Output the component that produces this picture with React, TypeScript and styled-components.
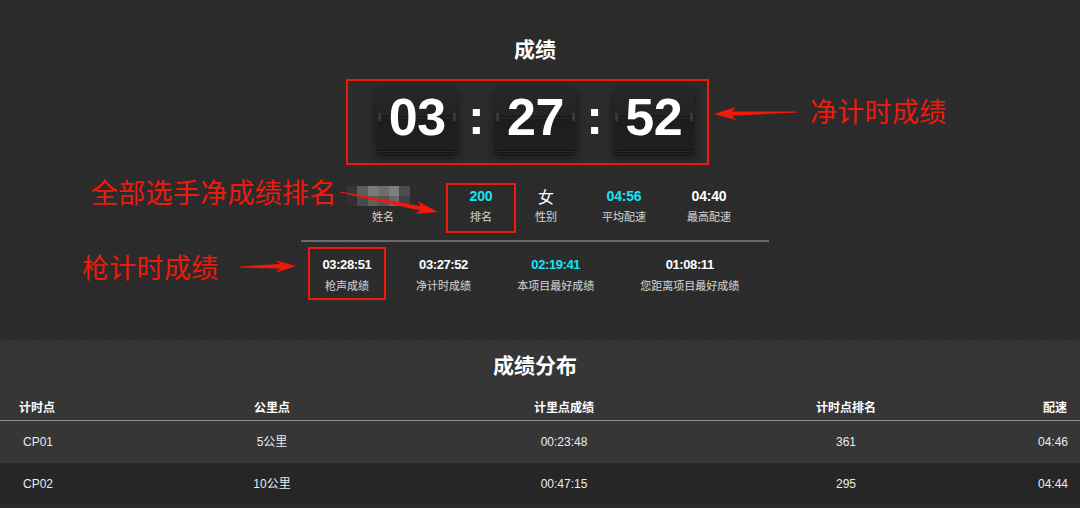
import React from 'react';
import styled, { createGlobalStyle } from 'styled-components';

const GlobalStyle = createGlobalStyle`
  html, body { margin: 0; padding: 0; background: #2b2b2b; }
  body { font-family: "Liberation Sans", "Noto Sans CJK SC", Arial, sans-serif; color: #fff; }
  * { box-sizing: border-box; }
`;

const CJK = `"Noto Sans CJK SC", "Liberation Sans", sans-serif`;
const RED = '#f0190c';
const CYAN = '#14e6f5';

const Page = styled.div`
  position: relative;
  width: 1080px;
  height: 508px;
  overflow: hidden;
`;

const TopSection = styled.section`
  height: 340px;
  padding: 34px 10px 0 0;
  display: flex;
  flex-direction: column;
  align-items: center;
  background: #2b2b2b;
  background-image: radial-gradient(rgba(255,255,255,0.018) 1px, transparent 1px);
  background-size: 3px 3px;
`;

const Title = styled.h1`
  margin: 0;
  font-family: ${CJK};
  font-size: 21px;
  font-weight: 700;
  line-height: 28px;
  color: #fff;
`;

const Clock = styled.div`
  margin-top: 17px;
  margin-right: 15px;
  width: 363px;
  height: 86px;
  border: 2px solid ${RED};
  padding: 3px 13px 8px 29px;
  display: flex;
  align-items: flex-start;
`;

const FlipCard = styled.div`
  position: relative;
  width: 81px;
  height: 66px;
  border-radius: 4px;
  background: linear-gradient(#282828 0%, #232323 48%, #1d1d1d 52%, #1f1f1f 100%);
  box-shadow: 0 1px 0 #121212, 0 2px 0 #2c2c2c, 0 3px 0 #141414, 0 4px 0 #282828,
    0 5px 0 #151515, 0 7px 8px rgba(0, 0, 0, 0.55);

  &::before {
    content: '';
    position: absolute;
    left: 0;
    right: 0;
    top: 32px;
    height: 2px;
    background: linear-gradient(#0e0e0e 50%, #2e2e2e 50%);
    opacity: 0.85;
  }
  &::after {
    content: '';
    position: absolute;
    left: 1px;
    right: 1px;
    top: 29px;
    height: 8px;
    border-left: 3px solid #3a3a3a;
    border-right: 3px solid #3a3a3a;
    border-radius: 1px;
  }
`;

const Digits = styled.span`
  position: relative;
  z-index: 1;
  display: block;
  font-family: "Liberation Sans", Arial, sans-serif;
  font-size: 52px;
  font-weight: 700;
  line-height: 66px;
  text-align: center;
  color: #fff;
  letter-spacing: -0.5px;
`;

const Colon = styled.span`
  width: 38px;
  text-align: center;
  font-family: "Liberation Sans", Arial, sans-serif;
  font-size: 50px;
  font-weight: 700;
  line-height: 66px;
  color: #fff;
`;

const InfoRow = styled.div`
  margin-top: 18px;
  margin-right: 4px;
  display: flex;
`;

const Stat = styled.div<{ $w: number; $hl?: boolean; $pad: string }>`
  width: ${(p) => p.$w}px;
  border: 2px solid ${(p) => (p.$hl ? RED : 'transparent')};
  padding: ${(p) => p.$pad};
  display: flex;
  flex-direction: column;
  align-items: center;
`;

const Value = styled.div<{ $accent?: boolean; $size: number; $lh: number }>`
  font-family: "Liberation Sans", Arial, sans-serif;
  font-weight: 700;
  font-size: ${(p) => p.$size}px;
  line-height: ${(p) => p.$lh}px;
  letter-spacing: ${(p) => (p.$size < 14 ? '-0.4px' : '-0.2px')};
  color: ${(p) => (p.$accent ? CYAN : '#fff')};
  white-space: nowrap;
`;

const Gender = styled.div`
  font-family: ${CJK};
  font-size: 16px;
  line-height: 20px;
  color: #fff;
`;

const Label = styled.div<{ $gap: number }>`
  margin-top: ${(p) => p.$gap}px;
  font-family: ${CJK};
  font-size: 11px;
  font-weight: 500;
  line-height: 16px;
  color: #bdbdbd;
  white-space: nowrap;
`;

const Mosaic = styled.div`
  margin-left: -10px;
  height: 20px;
  display: grid;
  grid-template-columns: repeat(6, 10.5px);
  grid-template-rows: repeat(2, 10px);
  filter: blur(0.4px);
`;

const Tile = styled.span<{ $c: string }>`
  background: ${(p) => p.$c};
`;

const Divider = styled.hr`
  margin: 7px 0 0;
  width: 468px;
  height: 2px;
  border: 0;
  background: #6a6a6a;
`;

const ResultRow = styled.div`
  margin-top: 5px;
  width: 468px;
  padding-left: 7px;
  display: flex;
`;

const BottomSection = styled.section`
  background: #363636;
  border-top: 1px solid #303030;
`;

const SubTitle = styled.h2`
  margin: 0;
  padding: 9px 10px 0 0;
  text-align: center;
  font-family: ${CJK};
  font-size: 21px;
  font-weight: 700;
  line-height: 28px;
  color: #fff;
`;

const Grid = styled.div`
  display: grid;
  grid-template-columns: 172px 200px 384px 180px 1fr;
`;

const HeadRow = styled(Grid)`
  padding-top: 21px;
  padding-bottom: 5px;
  border-bottom: 1px solid #8f8f8f;
`;

const BodyRow = styled(Grid)<{ $alt?: boolean }>`
  height: 42px;
  background: ${(p) => (p.$alt ? '#262626' : '#363636')};
`;

type Align = 'left' | 'center' | 'right';

const HeadCell = styled.div<{ $align: Align }>`
  text-align: ${(p) => p.$align};
  padding: ${(p) => (p.$align === 'left' ? '0 0 0 19px' : p.$align === 'right' ? '0 13px 0 0' : '0')};
  font-family: ${CJK};
  font-size: 12px;
  font-weight: 700;
  line-height: 16px;
  color: #fff;
`;

const Cell = styled.div<{ $align: Align }>`
  text-align: ${(p) => p.$align};
  padding: ${(p) => (p.$align === 'left' ? '0 0 0 23px' : p.$align === 'right' ? '0 12px 0 0' : '0')};
  font-family: "Liberation Sans", ${CJK};
  font-size: 12px;
  line-height: 42px;
  color: #ececec;
`;

const Overlay = styled.svg`
  position: absolute;
  left: 0;
  top: 0;
  pointer-events: none;
`;

const Note = styled.div<{ $x: number; $y: number }>`
  position: absolute;
  left: ${(p) => p.$x}px;
  top: ${(p) => p.$y}px;
  font-family: ${CJK};
  font-size: 27px;
  line-height: 34px;
  color: ${RED};
  white-space: nowrap;
  letter-spacing: 0.3px;
`;

function arrowPoints(x1: number, y1: number, x2: number, y2: number, headLen = 22, headHalf = 6.5, tailHalf = 0.6, neckHalf = 2.2) {
  const dx = x2 - x1;
  const dy = y2 - y1;
  const L = Math.hypot(dx, dy);
  const ux = dx / L;
  const uy = dy / L;
  const px = -uy;
  const py = ux;
  const nx = x2 - ux * headLen;
  const ny = y2 - uy * headLen;
  const bx = x2 - ux * (headLen - 4);
  const by = y2 - uy * (headLen - 4);
  const pts: [number, number][] = [
    [x1 + px * tailHalf, y1 + py * tailHalf],
    [bx + px * neckHalf, by + py * neckHalf],
    [nx + px * headHalf, ny + py * headHalf],
    [x2, y2],
    [nx - px * headHalf, ny - py * headHalf],
    [bx - px * neckHalf, by - py * neckHalf],
    [x1 - px * tailHalf, y1 - py * tailHalf],
  ];
  return pts.map((p) => `${p[0].toFixed(1)},${p[1].toFixed(1)}`).join(' ');
}

const mosaic = [
  '#353535', '#5e5e5e', '#7a7a7a', '#6e6e6e', '#7f7f7f', '#4c4c4c',
  '#303030', '#4a4a4a', '#5f5f5f', '#555', '#676767', '#404040',
];

const info = [
  { label: '排名', value: '200', w: 70, accent: true, hl: true },
  { label: '性别', value: '女', w: 60, gender: true },
  { label: '平均配速', value: '04:56', w: 96, accent: true },
  { label: '最高配速', value: '04:40', w: 74 },
];

const results = [
  { value: '03:28:51', label: '枪声成绩', w: 79, hl: true },
  { value: '03:27:52', label: '净计时成绩', w: 117 },
  { value: '02:19:41', label: '本项目最好成绩', w: 111, accent: true },
  { value: '01:08:11', label: '您距离项目最好成绩', w: 161 },
];

const rows = [
  ['CP01', '5公里', '00:23:48', '361', '04:46'],
  ['CP02', '10公里', '00:47:15', '295', '04:44'],
];
const heads = ['计时点', '公里点', '计里点成绩', '计时点排名', '配速'];
const aligns: Align[] = ['left', 'center', 'center', 'center', 'right'];

export default function App() {
  return (
    <Page>
      <GlobalStyle />
      <TopSection>
        <Title>成绩</Title>
        <Clock>
          <FlipCard><Digits>03</Digits></FlipCard>
          <Colon>:</Colon>
          <FlipCard><Digits>27</Digits></FlipCard>
          <Colon>:</Colon>
          <FlipCard><Digits>52</Digits></FlipCard>
        </Clock>
        <InfoRow>
          <Stat $w={126} $pad="1px 0 7px">
            <Mosaic>
              {mosaic.map((c, i) => (
                <Tile key={i} $c={c} />
              ))}
            </Mosaic>
            <Label $gap={2}>姓名</Label>
          </Stat>
          {info.map((it) => (
            <Stat key={it.label} $w={it.w} $hl={it.hl} $pad="1px 0 7px">
              {it.gender ? (
                <Gender>{it.value}</Gender>
              ) : (
                <Value $accent={it.accent} $size={14} $lh={20}>
                  {it.value}
                </Value>
              )}
              <Label $gap={2}>{it.label}</Label>
            </Stat>
          ))}
        </InfoRow>
        <Divider />
        <ResultRow>
          {results.map((it) => (
            <Stat key={it.label} $w={it.w} $hl={it.hl} $pad="7px 0 5px">
              <Value $accent={it.accent} $size={13} $lh={18}>
                {it.value}
              </Value>
              <Label $gap={3}>{it.label}</Label>
            </Stat>
          ))}
        </ResultRow>
      </TopSection>
      <BottomSection>
        <SubTitle>成绩分布</SubTitle>
        <HeadRow>
          {heads.map((h, i) => (
            <HeadCell key={h} $align={aligns[i]}>
              {h}
            </HeadCell>
          ))}
        </HeadRow>
        {rows.map((r, ri) => (
          <BodyRow key={r[0]} $alt={ri % 2 === 1}>
            {r.map((c, i) => (
              <Cell key={i} $align={aligns[i]}>
                {c}
              </Cell>
            ))}
          </BodyRow>
        ))}
      </BottomSection>

      <Overlay width={1080} height={508} viewBox="0 0 1080 508">
        <polygon points={arrowPoints(797, 112, 714, 114)} fill={RED} />
        <polygon points={arrowPoints(340, 192, 438, 212)} fill={RED} />
        <polygon points={arrowPoints(240, 267, 296, 266, 20, 6)} fill={RED} />
      </Overlay>
      <Note $x={810} $y={94}>净计时成绩</Note>
      <Note $x={91} $y={175}>全部选手净成绩排名</Note>
      <Note $x={82} $y={250}>枪计时成绩</Note>
    </Page>
  );
}
